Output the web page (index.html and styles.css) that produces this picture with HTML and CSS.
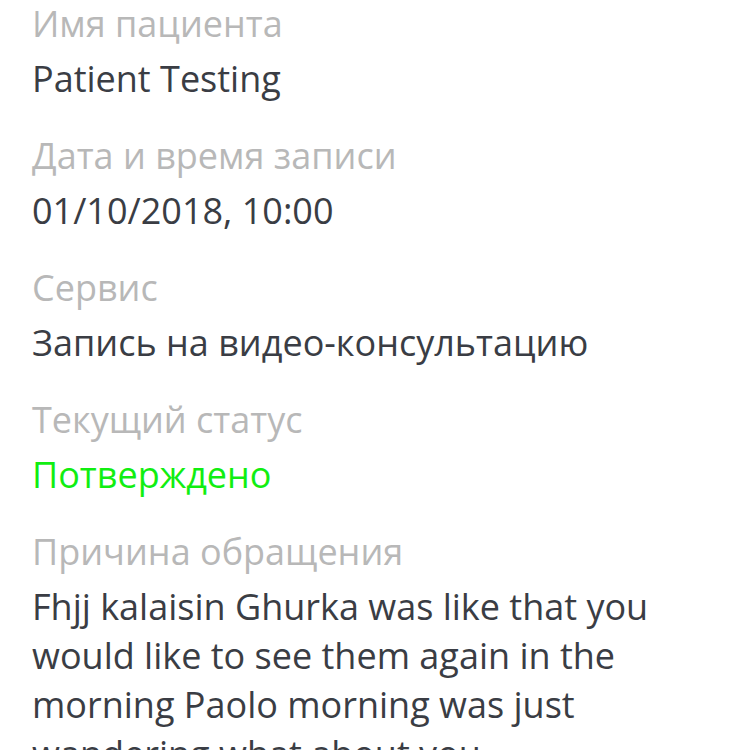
FILE: index.html
```html
<!DOCTYPE html>
<html lang="ru">
<head>
<meta charset="utf-8">
<link rel="stylesheet" href="styles.css">
</head>
<body>
<main class="details">
  <section class="field">
    <div class="label">Имя пациента</div>
    <div class="value">Patient Testing</div>
  </section>
  <section class="field">
    <div class="label">Дата и время записи</div>
    <div class="value">01/10/2018, 10:00</div>
  </section>
  <section class="field">
    <div class="label">Сервис</div>
    <div class="value">Запись на видео-консультацию</div>
  </section>
  <section class="field">
    <div class="label">Текущий статус</div>
    <div class="value status">Потверждено</div>
  </section>
  <section class="field">
    <div class="label">Причина обращения</div>
    <div class="value reason">Fhjj kalaisin Ghurka was like that you would like to see them again in the morning Paolo morning was just wandering what about you</div>
  </section>
</main>
</body>
</html>
```
FILE: styles.css
```css
html, body {
  margin: 0;
  padding: 0;
  background: #ffffff;
}
body {
  font-family: "Open Sans", "Noto Sans", sans-serif;
  width: 750px;
  height: 750px;
  overflow: hidden;
}
.details {
  display: flex;
  flex-direction: column;
  gap: 31px;
  padding: 2px 30px 0 32px;
}
.field {
  display: flex;
  flex-direction: column;
  gap: 8px;
}
.label {
  font-size: 36px;
  line-height: 44px;
  color: #b8b8b8;
}
.value {
  font-size: 36px;
  line-height: 49px;
  color: #3a3d44;
}
.status {
  color: #11ee11;
}
.reason {
  width: 650px;
}
```
